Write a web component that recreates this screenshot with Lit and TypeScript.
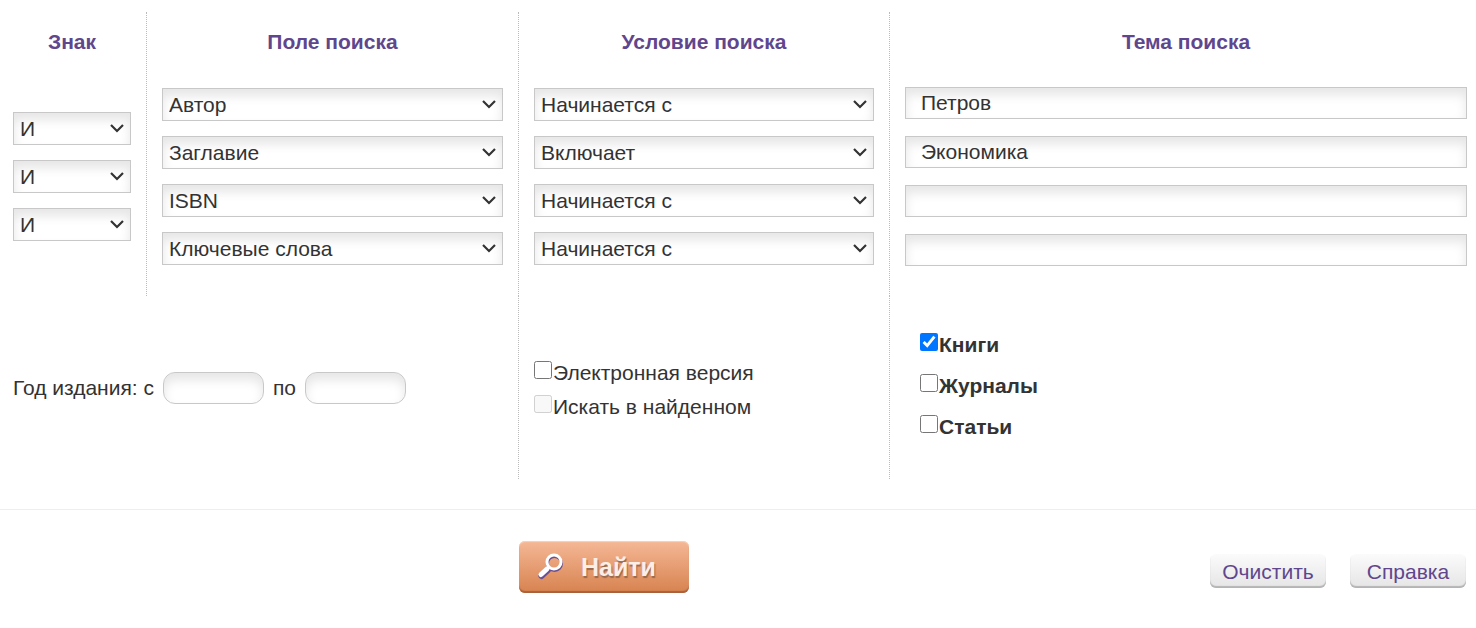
import { LitElement, html, css } from "lit";
import { customElement } from "lit/decorators.js";

const FIELDS = ["Автор", "Заглавие", "ISBN", "Ключевые слова"];
const CONDITIONS = ["Начинается с", "Включает"];
const SIGNS = ["И", "ИЛИ", "НЕ"];

@customElement("app-root")
export class AppRoot extends LitElement {
  static styles = css`
    :host {
      display: block;
      padding-top: 12px;
      background: #fff;
      color: #333;
      font: 21px/24px "Liberation Sans", Arial, sans-serif;
    }
    * { box-sizing: border-box; }
    form { margin: 0; }
    .grid {
      display: grid;
      grid-template-columns: minmax(0, 147fr) minmax(0, 372fr) minmax(0, 371fr) minmax(0, 586fr);
    }
    .column {
      display: flex;
      flex-direction: column;
      padding: 0 15px;
      border-right: 1px dotted #bbb;
    }
    .first { padding-left: 13px; }
    .last { padding-right: 9px; border-right: 0; }
    .title {
      margin: 0;
      padding: 18px 0;
      color: #5f468d;
      font-size: 21px;
      line-height: 24px;
      text-align: center;
    }
    .stack {
      flex: 1;
      display: flex;
      flex-direction: column;
      justify-content: center;
      gap: 15px;
      padding: 16px 0 31px;
    }
    .inputs { gap: 17px; padding: 15px 0 30px; }
    .pick { position: relative; display: block; }
    .pick svg {
      position: absolute;
      right: 6px;
      top: 11px;
      width: 16px;
      height: 10px;
      pointer-events: none;
    }
    select, .text {
      display: block;
      width: 100%;
      margin: 0;
      border: 1px solid #c8c8c8;
      border-radius: 0;
      background: #fff;
      box-shadow: inset 0 7px 11px #e6e6e6;
      color: #333;
      font: inherit;
    }
    select {
      height: 33px;
      padding: 0 24px 0 6px;
      appearance: none;
    }
    .text { height: 32px; padding: 0 15px; }
    .extra { border-right: 1px dotted #bbb; min-height: 183px; }
    .years {
      grid-column: span 2;
      display: flex;
      align-items: center;
      gap: 9px;
      padding-left: 13px;
    }
    .years .text { width: 101px; border-radius: 12px; }
    .options {
      display: flex;
      flex-direction: column;
      align-items: flex-start;
      gap: 10px;
      padding: 65px 15px 0;
    }
    .kinds {
      gap: 17px;
      padding: 37px 30px 0;
      border-right: 0;
      font-weight: bold;
    }
    .check { display: flex; align-items: flex-start; gap: 1px; }
    .check input { width: 18px; height: 18px; margin: 0; }
    .actions {
      margin-top: 30px;
      padding-top: 31px;
      border-top: 1px solid #eee;
    }
    .find {
      grid-column: 3;
      justify-self: start;
      display: flex;
      align-items: center;
      gap: 16px;
      width: 170px;
      height: 52px;
      padding: 0 16px;
      border: 0;
      border-radius: 6px;
      background: linear-gradient(#f5b896, #d7824f);
      box-shadow: inset 0 1px 1px #f9d3bd, inset 0 -2px 1px #a8613a;
      color: #fbeee6;
      font: bold 25px/28px "Liberation Sans", Arial, sans-serif;
      text-shadow: 1px 2px 1px #9a684c;
    }
    .find svg { flex: none; width: 30px; height: 30px; }
    .side {
      display: flex;
      justify-content: flex-end;
      align-items: flex-start;
      gap: 24px;
      padding: 13px 10px 0 0;
    }
    .plain {
      width: 116px;
      height: 34px;
      padding: 2px 0 0;
      border: 0;
      border-radius: 6px;
      background: linear-gradient(#fbfbfb, #e5e5e5);
      box-shadow: inset 0 -2px 1px #b4b4b4;
      color: #5f468d;
      font: inherit;
    }
  `;

  private pick(label: string, options: string[], value: string) {
    return html`<div class="pick">
      <select aria-label=${label}>
        ${options.map((o) => html`<option ?selected=${o === value}>${o}</option>`)}
      </select>
      <svg viewBox="0 0 16 10" fill="none" stroke="#333" stroke-width="2.2" aria-hidden="true">
        <path d="M2 2 L8 8 L14 2" />
      </svg>
    </div>`;
  }

  private check(label: string, checked = false, disabled = false) {
    return html`<label class="check"
      ><input type="checkbox" ?checked=${checked} ?disabled=${disabled} /><span>${label}</span></label
    >`;
  }

  render() {
    return html`<form @submit=${(e: Event) => e.preventDefault()}>
      <div class="grid">
        <div class="column first">
          <h2 class="title">Знак</h2>
          <div class="stack">${[1, 2, 3].map(() => this.pick("Знак", SIGNS, "И"))}</div>
        </div>
        <div class="column">
          <h2 class="title">Поле поиска</h2>
          <div class="stack">${FIELDS.map((f) => this.pick("Поле поиска", FIELDS, f))}</div>
        </div>
        <div class="column">
          <h2 class="title">Условие поиска</h2>
          <div class="stack">
            ${[0, 1, 0, 0].map((i) => this.pick("Условие поиска", CONDITIONS, CONDITIONS[i]))}
          </div>
        </div>
        <div class="column last">
          <h2 class="title">Тема поиска</h2>
          <div class="stack inputs">
            ${["Петров", "Экономика", "", ""].map(
              (v) => html`<input class="text" type="text" aria-label="Тема поиска" .value=${v} />`
            )}
          </div>
        </div>
        <div class="extra years">
          <label for="from">Год издания: с</label>
          <input id="from" class="text" type="text" />
          <label for="to">по</label>
          <input id="to" class="text" type="text" />
        </div>
        <div class="extra options">
          ${this.check("Электронная версия")} ${this.check("Искать в найденном", false, true)}
        </div>
        <div class="extra options kinds">
          ${this.check("Книги", true)} ${this.check("Журналы")} ${this.check("Статьи")}
        </div>
      </div>
      <div class="grid actions">
        <button class="find" type="submit">
          <svg viewBox="0 0 30 30" fill="none" aria-hidden="true">
            <g stroke="#6a5090" transform="translate(0.500 1.500)">
              <circle cx="19" cy="10" r="7" stroke-width="3" />
              <path d="M12.500 16.500 L6 22.500" stroke-width="6" stroke-linecap="round" />
            </g>
            <g stroke="#fff">
              <circle cx="19" cy="10" r="7" stroke-width="3" />
              <path d="M14 15 L12 17" stroke-width="3" />
              <path d="M12 17 L6 22.500" stroke-width="5" stroke-linecap="round" />
            </g>
          </svg>
          Найти
        </button>
        <div class="side">
          <button class="plain" type="reset">Очистить</button>
          <button class="plain" type="button">Справка</button>
        </div>
      </div>
    </form>`;
  }
}
